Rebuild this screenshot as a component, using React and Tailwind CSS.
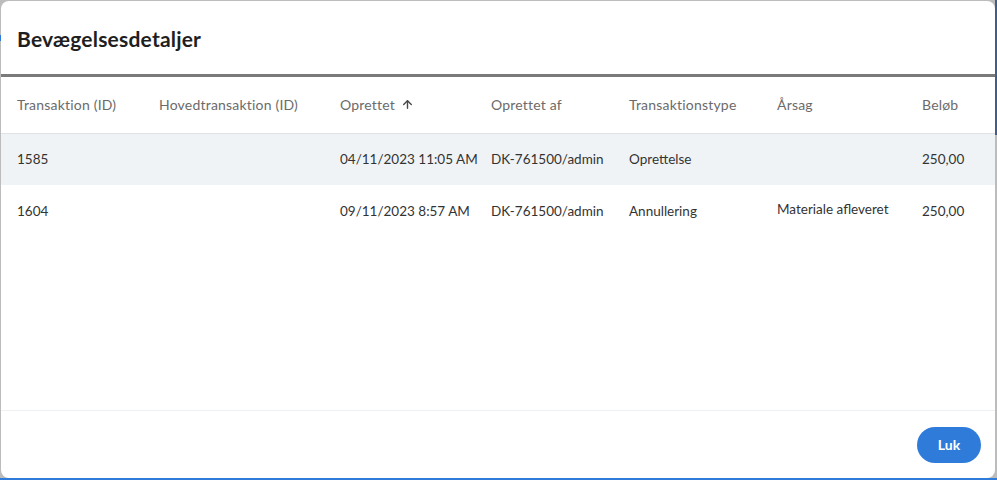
import React from 'react';
import { ArrowUp } from 'lucide-react';

const columns = [
  { label: 'Transaktion (ID)', w: 'w-[158px]' },
  { label: 'Hovedtransaktion (ID)', w: 'w-[181px]' },
  { label: 'Oprettet', w: 'w-[151px]', sorted: true },
  { label: 'Oprettet af', w: 'w-[138px]' },
  { label: 'Transaktionstype', w: 'w-[148px]' },
  { label: 'Årsag', w: 'w-[145px]' },
  { label: 'Beløb', w: '' },
];

const rows = [
  ['1585', '', '04/11/2023 11:05 AM', 'DK-761500/admin', 'Oprettelse', '', '250,00'],
  ['1604', '', '09/11/2023 8:57 AM', 'DK-761500/admin', 'Annullering', 'Materiale afleveret', '250,00'],
];

export default function App() {
  return (
    <div className="relative h-[480px] w-[997px] overflow-hidden bg-[#bcbcbc] font-['Lato','Liberation_Sans',sans-serif]">
      {/* backdrop hints */}
      <div className="absolute left-0 top-[35px] h-[6px] w-[2px] bg-[#2f7bd9]" />
      <div className="absolute right-0 top-0 h-[135px] w-[2px] bg-[#3f5f8a]" />
      <div className="absolute bottom-0 left-0 h-[2px] w-full bg-[#2f7bd9]" />

      <div className="absolute left-[1px] top-[1px] flex h-[477px] w-[994px] flex-col overflow-hidden rounded-[8px] bg-white">
        <div className="flex h-[73px] items-center px-[16px] pt-[3px]">
          <h2 className="text-[21px] font-bold tracking-[0.2px] text-[#1f1f1f]">Bevægelsesdetaljer</h2>
        </div>
        <div className="h-[3px] bg-[#7a7a7a]" />

        <div className="flex-1">
          <table className="w-full table-fixed border-collapse text-left text-[14px]">
            <thead>
              <tr className="h-[56px] border-b border-[#dfe2e6]">
                {columns.map((c, i) => (
                  <th key={i} className={`${c.w} ${i === 0 ? 'pl-[16px]' : ''} align-middle font-normal tracking-[0.2px] text-[#6b6b6b]`}>
                    <span className="inline-flex items-center gap-[6px]">
                      {c.label}
                      {c.sorted && <ArrowUp className="h-[13px] w-[13px] text-[#4a4a4a]" strokeWidth={2.6} />}
                    </span>
                  </th>
                ))}
              </tr>
            </thead>
            <tbody>
              {rows.map((r, ri) => (
                <tr key={ri} className={`h-[52px] ${ri === 0 ? 'bg-[#f0f3f6]' : 'bg-white'}`}>
                  {r.map((cell, ci) => (
                    <td
                      key={ci}
                      className={`${ci === 0 ? 'pl-[16px]' : ''} ${ci === 5 ? 'pb-[4px]' : ''} whitespace-nowrap align-middle text-[13.5px] text-[#333333]`}
                    >
                      {cell}
                    </td>
                  ))}
                </tr>
              ))}
            </tbody>
          </table>
        </div>

        <div className="flex h-[68px] items-center justify-end border-t border-[#eef1f4] pr-[14px]">
          <button className="h-[36px] w-[64px] rounded-full bg-[#2f7bd9] text-[14px] font-bold text-white">Luk</button>
        </div>
      </div>
    </div>
  );
}
